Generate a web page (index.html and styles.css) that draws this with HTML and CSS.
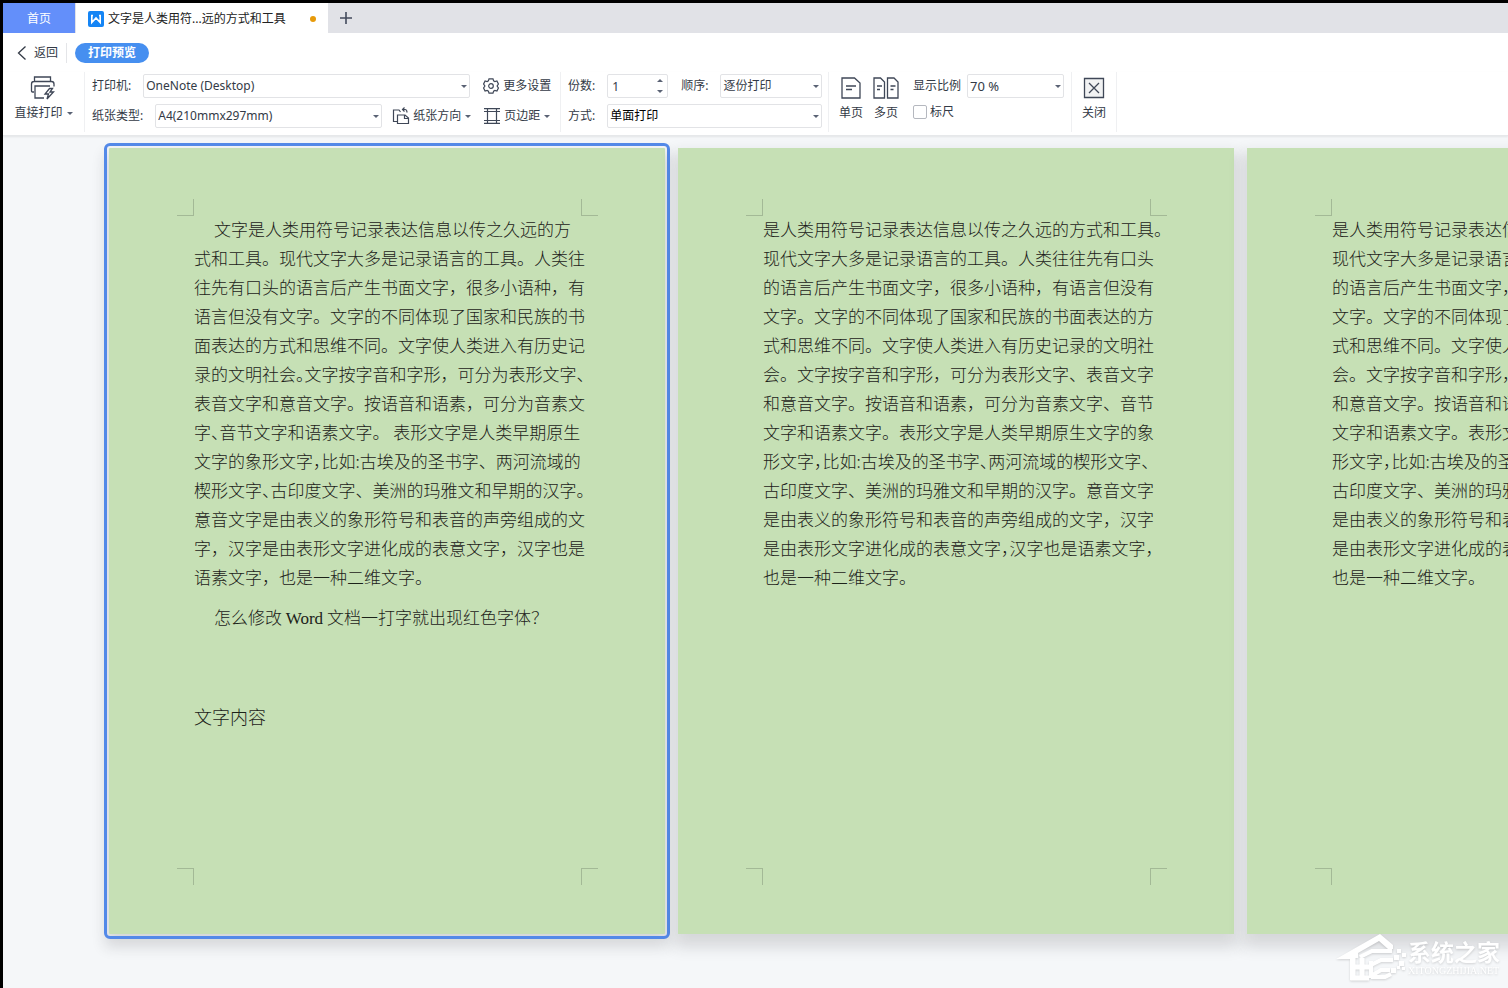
FILE: index.html
```html
<!DOCTYPE html>
<html lang="zh-CN">
<head>
    <meta charset="UTF-8">
    <meta name="viewport" content="width=device-width, initial-scale=1.0">
    <title>打印预览</title>
    <link rel="stylesheet" href="styles.css">
</head>
<body>
    <nav class="tabs">
        <button class="tab home">首页</button>
        <button class="tab active">
            <svg class="logo" width="16" height="16" viewBox="0 0 16 16">
                <rect width="16" height="16" rx="2" fill="#1585f5"/>
                <path d="M3 4.5h2M3.8 4.5v7L8 7l4.2 4.5v-7M11 4.5h2" fill="none" stroke="#fff" stroke-width="1.6"/>
            </svg>
            <span>文字是人类用符...远的方式和工具</span>
            <i class="dot"></i>
        </button>
        <button class="new-tab" aria-label="新建">
            <svg width="12" height="12" viewBox="0 0 12 12"><path d="M6 0v12M0 6h12" stroke="#434a5c" stroke-width="1.6"/></svg>
        </button>
    </nav>

    <div class="title-row">
        <button class="back">
            <svg width="10" height="14" viewBox="0 0 10 14"><path d="M8.500.5L1.500 7l7 6.500" fill="none" stroke="#333a46" stroke-width="1.300"/></svg>
            返回
        </button>
        <span class="pill">打印预览</span>
    </div>

    <div class="toolbar">
        <div class="group print">
            <button class="big">
                <svg width="26" height="24" viewBox="0 0 26 24" fill="none" stroke="#3f4757" stroke-width="1.300">
                    <path d="M4.500 5V1h16v4M4 16H2.500q-1 0-1-1V8q0-2.500 2.500-2.500h17.500q2.500 0 2.500 2.500v2.500"/>
                    <path d="M14 22H5V10h15M19.500 12.500L15 18h3.500l-1.500 5 6.500-7H20l2.500-3.500z"/>
                </svg>
                <span>直接打印<i class="caret"></i></span>
            </button>
        </div>

        <div class="group rows setup">
            <div class="row">
                <label for="printer">打印机:</label>
                <span class="select printer"><select id="printer"><option>OneNote (Desktop)</option></select></span>
                <button class="tool">
                    <svg width="16" height="16" viewBox="0 0 16 16" fill="none" stroke="#3f4757" stroke-width="1.200">
                        <path d="M6 .800h4l.6 2 1.300.7 2-.5 1.500 3-1.300 2 1.300 2-1.500 3-2-.5-1.300.7-.6 2H6l-.6-2-1.300-.7-2 .5-1.500-3 1.300-2-1.300-2 1.500-3 2 .5 1.300-.7z"/>
                        <circle cx="8" cy="8" r="2.300"/>
                    </svg>
                    更多设置
                </button>
            </div>
            <div class="row">
                <label for="paper">纸张类型:</label>
                <span class="select paper"><select id="paper"><option>A4(210mmx297mm)</option></select></span>
                <button class="tool direction">
                    <svg width="18" height="18" viewBox="0 0 18 18" fill="none" stroke="#3f4757" stroke-width="1.200">
                        <path d="M5 14.500H1.500V3H7l1.500 2M5.500 16.500V8h7.500l3.500 3v5.500zM12.500 8v3.500h4M10.500 2.500h2.500q2 0 2 3M12.500.5l-2 2 2 2"/>
                    </svg>
                    <span>纸张方向<i class="caret"></i></span>
                </button>
                <button class="tool">
                    <svg width="16" height="16" viewBox="0 0 16 16" fill="none" stroke="#3f4757" stroke-width="1.200">
                        <path d="M3.500 0v16M12.500 0v16M0 .600h16M0 3.500h16M0 12.500h16M0 15.400h16"/>
                    </svg>
                    <span>页边距<i class="caret"></i></span>
                </button>
            </div>
        </div>

        <div class="group rows copies">
            <div class="row">
                <label for="count">份数:</label>
                <span class="spin"><input id="count" type="text" value="1"></span>
                <label for="order">顺序:</label>
                <span class="select"><select id="order"><option>逐份打印</option></select></span>
            </div>
            <div class="row">
                <label for="mode">方式:</label>
                <span class="select dark"><select id="mode"><option>单面打印</option></select></span>
            </div>
        </div>

        <div class="group view">
            <button class="big">
                <svg width="20" height="24" viewBox="0 0 20 24" fill="none" stroke="#3f4757" stroke-width="1.300">
                    <path d="M1 2h12.500L19 7v15H1zM5 10h10M5 13.500h6"/>
                </svg>
                <span>单页</span>
            </button>
            <button class="big">
                <svg width="26" height="24" viewBox="0 0 26 24" fill="none" stroke="#3f4757" stroke-width="1.300">
                    <path d="M1 2h6.500L11.500 6v16H1zM14.500 2H21l4 4v16H14.500zM4 10h5M4 13.500h3M17.500 10h5M17.500 13.500h3"/>
                </svg>
                <span>多页</span>
            </button>
            <div class="rows zoom">
                <div class="row">
                    <label for="scale">显示比例</label>
                    <span class="select"><select id="scale"><option>70 %</option></select></span>
                </div>
                <label class="check"><input type="checkbox"> 标尺</label>
            </div>
        </div>

        <div class="group close">
            <button class="big">
                <svg width="22" height="24" viewBox="0 0 22 24" fill="none" stroke="#3f4757" stroke-width="1.300">
                    <path d="M1.500 2.500h19v19h-19z" fill="#f1f2f3"/>
                    <path d="M6 7l10 10M16 7L6 17"/>
                </svg>
                <span>关闭</span>
            </button>
        </div>
    </div>

    <main class="preview">
        <article class="page selected">
            <div class="content">
                <i class="mark tl"></i><i class="mark tr"></i><i class="mark bl"></i><i class="mark br"></i>
                <p class="indent">文字是人类用符号记录表达信息以传之久远的方<br>
                式和工具。现代文字大多是记录语言的工具。人类往<br>
                往先有口头的语言后产生书面文字，很多小语种，有<br>
                语言但没有文字。文字的不同体现了国家和民族的书<br>
                面表达的方式和思维不同。文字使人类进入有历史记<br>
                录的文明社会<b>。</b>文字按字音和字形，可分为表形文字<b>、</b><br>
                表音文字和意音文字。按语音和语素，可分为音素文<br>
                字<b>、</b>音节文字和语素文字。 表形文字是人类早期原生<br>
                文字的象形文字<b>，</b>比如:古埃及的圣书字、两河流域的<br>
                楔形文字<b>、</b>古印度文字、美洲的玛雅文和早期的汉字<b>。</b><br>
                意音文字是由表义的象形符号和表音的声旁组成的文<br>
                字，汉字是由表形文字进化成的表意文字，汉字也是<br>
                语素文字，也是一种二维文字。</p>
                <p class="indent">怎么修改 <span class="latin">Word</span> 文档一打字就出现红色字体<b>？</b></p>
                <h2>文字内容</h2>
            </div>
        </article>

        <article class="page">
            <div class="content">
                <i class="mark tl"></i><i class="mark tr"></i><i class="mark bl"></i><i class="mark br"></i>
                <p>是人类用符号记录表达信息以传之久远的方式和工具<b>。</b><br>
                现代文字大多是记录语言的工具。人类往往先有口头<br>
                的语言后产生书面文字，很多小语种，有语言但没有<br>
                文字。文字的不同体现了国家和民族的书面表达的方<br>
                式和思维不同。文字使人类进入有历史记录的文明社<br>
                会。文字按字音和字形，可分为表形文字、表音文字<br>
                和意音文字。按语音和语素，可分为音素文字、音节<br>
                文字和语素文字。表形文字是人类早期原生文字的象<br>
                形文字<b>，</b>比如:古埃及的圣书字<b>、</b>两河流域的楔形文字<b>、</b><br>
                古印度文字、美洲的玛雅文和早期的汉字。意音文字<br>
                是由表义的象形符号和表音的声旁组成的文字，汉字<br>
                是由表形文字进化成的表意文字<b>，</b>汉字也是语素文字<b>，</b><br>
                也是一种二维文字。</p>
            </div>
        </article>

        <article class="page">
            <div class="content">
                <i class="mark tl"></i><i class="mark tr"></i><i class="mark bl"></i><i class="mark br"></i>
                <p>是人类用符号记录表达信息以传之久远的方式和工具<b>。</b><br>
                现代文字大多是记录语言的工具。人类往往先有口头<br>
                的语言后产生书面文字，很多小语种，有语言但没有<br>
                文字。文字的不同体现了国家和民族的书面表达的方<br>
                式和思维不同。文字使人类进入有历史记录的文明社<br>
                会。文字按字音和字形，可分为表形文字、表音文字<br>
                和意音文字。按语音和语素，可分为音素文字、音节<br>
                文字和语素文字。表形文字是人类早期原生文字的象<br>
                形文字<b>，</b>比如:古埃及的圣书字<b>、</b>两河流域的楔形文字<b>、</b><br>
                古印度文字、美洲的玛雅文和早期的汉字。意音文字<br>
                是由表义的象形符号和表音的声旁组成的文字，汉字<br>
                是由表形文字进化成的表意文字<b>，</b>汉字也是语素文字<b>，</b><br>
                也是一种二维文字。</p>
            </div>
        </article>
    </main>

    <div class="watermark">
        <svg width="72" height="48" viewBox="0 0 72 48" fill="none" stroke="#fff" stroke-width="4">
            <path d="M0 25L44 0l13 11v4h-5L43 7 22 19v5H17v22h-3V25z" fill="#fff" stroke="none"/>
            <path d="M17 22v22h16M26 24v19M17 33h16" stroke-width="5"/>
            <path d="M24 23l12-6h20M35 44V27M35 31l10-5h12M35 42l10-6h9M35 43h14l6-3"/>
            <path d="M61 15h4v4h-4zM66 19h4v4h-4zM58 21h5v5h-5zM63 27h5v5h-5zM55 34h5v5h-5zM61 32h3v3h-3zM66 33h3v3h-3z" fill="#fff" stroke="none"/>
        </svg>
        <div class="watermark-text">
            <strong>系统之家</strong>
            <small>XITONGZHIJIA.NET</small>
        </div>
    </div>
</body>
</html>
```
FILE: styles.css
```css
* {
    box-sizing: border-box;
}

body {
    margin: 0;
    min-height: 100vh;
    display: flex;
    flex-direction: column;
    border-top: 3px solid #000;
    border-left: 3px solid #000;
    background-color: #f5f7f9;
    color: #333a46;
    font-family: "Noto Sans", "Noto Sans CJK SC", sans-serif;
    font-size: 12px;
    line-height: 16px;
    overflow-x: hidden;
}

button, input, select {
    font: inherit;
    color: inherit;
}

button {
    border: none;
    padding: 0;
    background: none;
    white-space: nowrap;
    cursor: pointer;
}

label {
    white-space: nowrap;
}

/* tabs */
.tabs {
    display: flex;
    height: 30px;
    background-color: #e1e2e7;
}

.tab {
    padding-top: 2px;
}

.home {
    width: 73px;
    background-color: #638ffa;
    border-right: 1px solid #e1e2e7;
    color: #fff;
}

.tab.active {
    display: flex;
    align-items: center;
    gap: 4px;
    width: 252px;
    padding: 2px 12px 0;
    background-color: #fff;
    color: #222;
}

.dot {
    width: 6px;
    height: 6px;
    margin-left: auto;
    border-radius: 50%;
    background-color: #e79a0a;
}

.new-tab {
    display: flex;
    align-items: center;
    padding: 0 12px;
}

/* back + title */
.title-row {
    display: flex;
    align-items: center;
    height: 39px;
    padding-left: 14px;
    background-color: #fff;
}

.back {
    display: flex;
    align-items: center;
    gap: 7px;
    height: 20px;
    padding-right: 8px;
    border-right: 1px solid #e4e5e8;
}

.pill {
    margin-left: 8px;
    padding: 2px 13px;
    border-radius: 10px;
    background-color: #468ff0;
    color: #fff;
    font-weight: bold;
}

/* toolbar */
.toolbar {
    display: flex;
    height: 64px;
    background-color: #fff;
    border-bottom: 1px solid #e6e8ea;
    box-shadow: 0 1px 2px rgba(0, 0, 0, 0.08);
}

.group {
    display: flex;
    flex-shrink: 0;
    height: 60px;
    padding: 0 7px;
    border-right: 1px solid #eff0f2;
}

.rows {
    display: flex;
    flex-direction: column;
    gap: 6px;
    padding-top: 2px;
}

.row {
    display: flex;
    align-items: center;
    height: 24px;
}

.print {
    width: 82px;
    justify-content: center;
}

.setup {
    width: 476px;
}

.copies {
    width: 268px;
    padding-right: 6px;
}

.big {
    display: flex;
    flex-direction: column;
    align-items: center;
    gap: 5px;
    padding-top: 4px;
    height: 50px;
}

.tool {
    display: flex;
    align-items: center;
    gap: 4px;
    margin-left: 13px;
}

.tool.direction {
    margin-left: 10px;
    gap: 3px;
}

.caret {
    display: inline-block;
    border: 3px solid transparent;
    border-top-color: #5a6274;
    border-bottom: none;
    margin-left: 4px;
    vertical-align: middle;
}

.select {
    position: relative;
    flex: 1;
    height: 24px;
    margin-left: 12px;
}

.select.printer {
    flex: none;
    width: 327px;
}

.select.paper {
    flex: none;
    width: 227px;
}

.select select {
    width: 100%;
    height: 24px;
    padding: 0 2px;
    appearance: none;
    background-color: #fff;
    border: 1px solid #e2e3e6;
    border-radius: 2px;
}

.select.dark select {
    color: #000;
}

.select::after {
    content: "";
    position: absolute;
    right: 3px;
    top: 11px;
    border: 3px solid transparent;
    border-top-color: #5a6274;
    border-bottom: none;
    pointer-events: none;
}

.spin {
    position: relative;
    width: 61px;
    margin: 0 13px 0 12px;
}

.spin input {
    width: 100%;
    height: 24px;
    padding: 0 4px;
    border: 1px solid #e2e3e6;
    border-radius: 2px;
}

.spin::before, .spin::after {
    content: "";
    position: absolute;
    right: 5px;
    border: 3px solid transparent;
}

.spin::before {
    top: 5px;
    border-top: none;
    border-bottom-color: #5a6274;
}

.spin::after {
    bottom: 5px;
    border-bottom: none;
    border-top-color: #5a6274;
}

.view {
    gap: 10px;
    padding-left: 10px;
}

.zoom {
    width: 155px;
    padding-left: 4px;
}

.zoom .select {
    margin-left: 6px;
}

.zoom .select select {
    font-size: 13px;
}

.check {
    display: flex;
    align-items: center;
    gap: 3px;
}

.check input {
    appearance: none;
    width: 14px;
    height: 14px;
    margin: 0;
    border: 1px solid #b5b8bf;
    border-radius: 2px;
}

.close {
    padding: 0 10px;
}

/* preview pages */
.preview {
    flex: 1;
    display: flex;
    gap: 13px;
    padding: 12px 0 52px 106px;
    overflow: hidden;
}

.page {
    flex: none;
    width: 556px;
    height: 786px;
    padding: 66px 84px 66px 85px;
    background-color: #c6e0b5;
    box-shadow: 0 9px 14px 4px rgba(40, 40, 50, 0.15);
}

.page.selected {
    outline: 3px solid #5389e8;
    outline-offset: 2px;
    border-radius: 1px;
}

.content {
    position: relative;
    height: 100%;
    color: #1c2219;
    font-family: "Noto Sans CJK SC", sans-serif;
    font-size: 17px;
    font-weight: 300;
    line-height: 29px;
    white-space: nowrap;
}

.content p {
    margin: 0 0 11px;
}

.content .indent {
    text-indent: 20px;
}

/* half-width punctuation */
.content b {
    font-weight: inherit;
    font-feature-settings: "halt";
}

.latin {
    font-family: "Liberation Serif", serif;
}

.content h2 {
    margin: 69px 0 0;
    font-size: 18px;
    font-weight: 300;
}

.mark {
    position: absolute;
    width: 17px;
    height: 17px;
    border: 0 solid #a3b996;
}

.tl, .tr {
    top: -15px;
}

.bl, .br {
    top: 100%;
}

.tl {
    right: 100%;
    border-width: 0 1px 1px 0;
}

.tr {
    left: 100%;
    border-width: 0 0 1px 1px;
}

.bl {
    right: 100%;
    border-width: 1px 1px 0 0;
}

.br {
    left: 100%;
    border-width: 1px 0 0 1px;
}

.watermark {
    position: fixed;
    right: 8px;
    bottom: 6px;
    display: flex;
    align-items: center;
    color: #fff;
    filter: drop-shadow(0 1px 1px rgba(0, 0, 0, 0.15));
}

.watermark-text {
    display: flex;
    flex-direction: column;
}

.watermark strong {
    font-size: 23px;
    line-height: 26px;
}

.watermark small {
    font-family: "Liberation Serif", serif;
    font-size: 10px;
    line-height: 12px;
}
```
